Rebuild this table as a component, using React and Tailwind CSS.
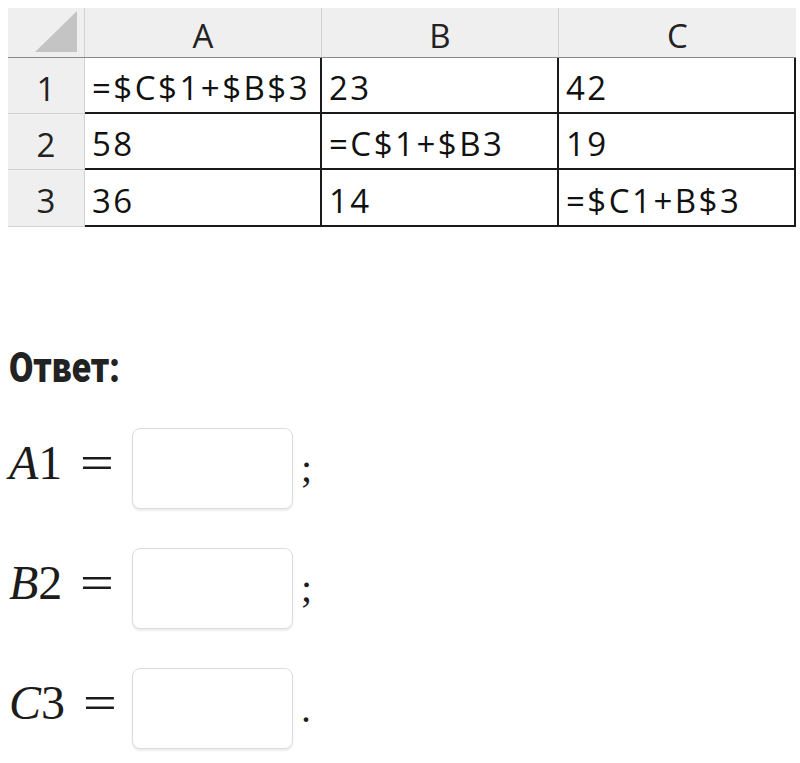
const columns = ['A', 'B', 'C'];

const rows = [
  ['=$C$1+$B$3', '23', '42'],
  ['58', '=C$1+$B3', '19'],
  ['36', '14', '=$C1+B$3'],
];

const answers = [
  { letter: 'A', digit: '1', end: ';' },
  { letter: 'B', digit: '2', end: ';' },
  { letter: 'C', digit: '3', end: '.' },
];

function Sheet() {
  return (
    <div className="w-[788px] font-['Open_Sans',sans-serif] text-[33px] text-[#111] tracking-[2.5px] leading-none">
      {/* header row */}
      <div className="flex h-[50px] bg-[#efefef] border-b border-[#8a8a8a]">
        <div className="w-[77px] shrink-0 border-r border-[#d2d2d2] flex items-end justify-end pr-[7px] pb-[5px]">
          <svg width="42" height="41" viewBox="0 0 42 41">
            <polygon points="42,0 42,41 0,41" fill="#c4c4c4" />
          </svg>
        </div>
        {columns.map((c, i) => (
          <div
            key={c}
            className={`w-[237px] shrink-0 flex items-center justify-center pt-[6px] tracking-normal text-[#222] ${i < 2 ? 'border-r border-[#d2d2d2]' : ''}`}
          >
            {c}
          </div>
        ))}
      </div>

      {/* data rows */}
      {rows.map((row, r) => (
        <div key={r} className={`flex ${r === 2 ? 'h-[57px]' : 'h-[56px]'}`}>
          <div className="w-[77px] shrink-0 bg-[#efefef] border-r border-b border-[#d2d2d2] flex items-center justify-center pt-[5px] tracking-normal text-[#222]">
            {r + 1}
          </div>
          {row.map((cell, i) => (
            <div
              key={i}
              className="w-[237px] shrink-0 border-r-2 border-b-2 border-[#1a1a1a] flex items-center pl-[7px] pt-[5px] whitespace-nowrap"
            >
              {cell}
            </div>
          ))}
        </div>
      ))}
    </div>
  );
}

function AnswerRow({ letter, digit, end }) {
  return (
    <div className="flex items-center h-[81px]">
      <div className="w-[123px] shrink-0 flex items-baseline font-['Liberation_Serif',serif] text-[48px] leading-none text-[#1c1c1c] mb-[12px]">
        <span className="italic">{letter}</span>
        <span>{digit}</span>
        <span className="ml-[18px] scale-x-[1.25] origin-left inline-block">=</span>
      </div>
      <div className="w-[161px] h-[81px] shrink-0 rounded-[8px] border border-[#dcdcdc] bg-white shadow-[0_2px_2px_rgba(0,0,0,0.08)]" />
      <span className="ml-[8px] font-['Liberation_Serif',serif] text-[40px] leading-none text-[#1c1c1c]">
        {end}
      </span>
    </div>
  );
}

export default function App() {
  return (
    <div className="min-h-screen bg-white pt-[8px] pl-[8px]">
      <Sheet />

      <div className="pl-[1px] mt-[120px]">
        <h2 className="font-['Roboto',sans-serif] font-black text-[42px] leading-none text-[#222] inline-block scale-x-[0.84] origin-left">
          Ответ:
        </h2>

        <div className="mt-[39px] flex flex-col gap-[39px]">
          {answers.map((a) => (
            <AnswerRow key={a.letter} {...a} />
          ))}
        </div>
      </div>
    </div>
  );
}
